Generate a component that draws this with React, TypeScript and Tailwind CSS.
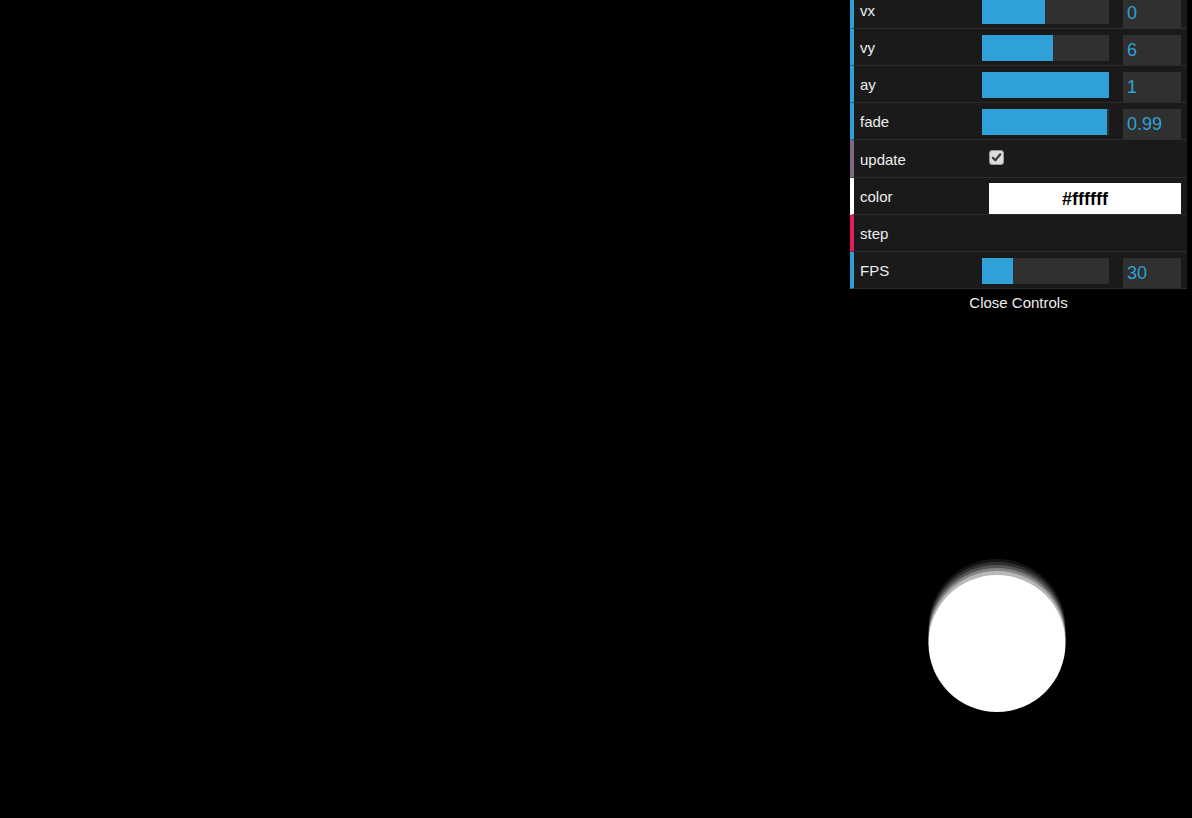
import React from "react";

type NumRow = { kind: "number"; label: string; value: string; frac: number };
type Row =
  | NumRow
  | { kind: "bool"; label: string }
  | { kind: "color"; label: string; value: string }
  | { kind: "fn"; label: string };

const rows: Row[] = [
  { kind: "number", label: "vx", value: "0", frac: 63 / 127 },
  { kind: "number", label: "vy", value: "6", frac: 71 / 127 },
  { kind: "number", label: "ay", value: "1", frac: 1 },
  { kind: "number", label: "fade", value: "0.99", frac: 125 / 127 },
  { kind: "bool", label: "update" },
  { kind: "color", label: "color", value: "#ffffff" },
  { kind: "fn", label: "step" },
  { kind: "number", label: "FPS", value: "30", frac: 31 / 127 },
];

function Label({ text }: { text: string }) {
  return (
    <div className="w-[128px] shrink-0 self-center pl-[6px] pt-[1px] text-[15px] leading-none text-[#eeeeee]">
      {text}
    </div>
  );
}

function RowView({ row }: { row: Row }) {
  if (row.kind === "number") {
    return (
      <div className="flex h-[37px] border-b border-b-[#2c2c2c] border-l-4 border-l-[#2fa1d6] bg-[#1a1a1a]">
        <Label text={row.label} />
        <div className="mt-[6px] h-[26px] w-[127px] shrink-0 bg-[#303030]">
          <div className="h-full bg-[#2fa1d6]" style={{ width: `${row.frac * 100}%` }} />
        </div>
        <div className="ml-[14px] mt-[6px] flex h-[30px] w-[58px] shrink-0 items-center bg-[#303030] pl-[4px] pb-[1px] text-[18px] leading-none text-[#2fa1d6]">
          {row.value}
        </div>
      </div>
    );
  }
  if (row.kind === "bool") {
    return (
      <div className="flex h-[38px] border-b border-b-[#2c2c2c] border-l-4 border-l-[#806787] bg-[#1a1a1a]">
        <Label text={row.label} />
        <div className="ml-[7px] mt-[10px] flex h-[15px] w-[15px] items-center justify-center rounded-[3px] border border-[#9a9a9a] bg-[#dcdcdc]">
          <svg width="11" height="11" viewBox="0 0 11 11">
            <path d="M1.8 5.8 L4.3 8.3 L9.3 2.3" fill="none" stroke="#3a3a3a" strokeWidth="2.2" strokeLinecap="round" strokeLinejoin="round" />
          </svg>
        </div>
      </div>
    );
  }
  if (row.kind === "color") {
    return (
      <div className="flex h-[37px] border-b border-b-[#2c2c2c] border-l-4 border-l-[#ffffff] bg-[#1a1a1a]">
        <Label text={row.label} />
        <div className="ml-[7px] mt-[5px] flex h-[31px] w-[192px] items-center justify-center bg-white text-[18px] font-semibold leading-none text-black">
          {row.value}
        </div>
      </div>
    );
  }
  return (
    <div className="flex h-[37px] border-b border-b-[#2c2c2c] border-l-4 border-l-[#e61d5f] bg-[#1a1a1a]">
      <Label text={row.label} />
    </div>
  );
}

export default function App() {
  const ghosts = [
    { dy: -16, o: 0.08 },
    { dy: -13, o: 0.12 },
    { dy: -10, o: 0.18 },
    { dy: -7, o: 0.28 },
    { dy: -4, o: 0.42 },
  ];
  return (
    <div
      className="relative h-[818px] w-full overflow-hidden bg-black"
      style={{ fontFamily: '"Liberation Sans", Arial, sans-serif' }}
    >
      <svg className="absolute inset-0" width="1192" height="818" viewBox="0 0 1192 818">
        {ghosts.map((g, i) => (
          <circle key={i} cx="997" cy={643.5 + g.dy} r="68.5" fill="#ffffff" fillOpacity={g.o} />
        ))}
        <circle cx="997" cy="643.5" r="68.5" fill="#ffffff" />
      </svg>
      <div className="relative flex justify-end pr-[5px]">
        <div className="w-[337px] overflow-hidden">
          <div className="-mt-[8px] flex flex-col">
            {rows.map((r) => (
              <RowView key={r.label} row={r} />
            ))}
          </div>
          <div className="flex h-[26px] items-center justify-center bg-black text-[15px] leading-none text-[#eeeeee]">
            Close Controls
          </div>
        </div>
      </div>
    </div>
  );
}
